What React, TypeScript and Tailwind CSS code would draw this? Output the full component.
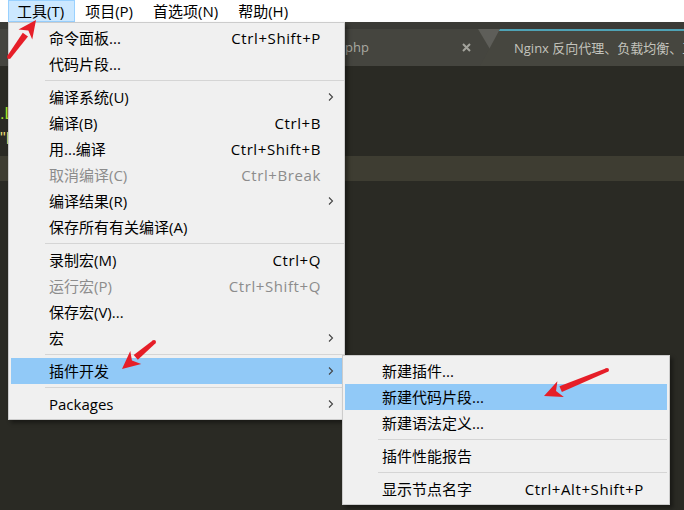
import React from "react";

type Entry =
	| "sep"
	| {
			label: string;
			shortcut?: string;
			sub?: boolean;
			disabled?: boolean;
			active?: boolean;
	  };

const mainItems: Entry[] = [
	{ label: "命令面板...", shortcut: "Ctrl+Shift+P" },
	{ label: "代码片段..." },
	"sep",
	{ label: "编译系统(U)", sub: true },
	{ label: "编译(B)", shortcut: "Ctrl+B" },
	{ label: "用...编译", shortcut: "Ctrl+Shift+B" },
	{ label: "取消编译(C)", shortcut: "Ctrl+Break", disabled: true },
	{ label: "编译结果(R)", sub: true },
	{ label: "保存所有有关编译(A)" },
	"sep",
	{ label: "录制宏(M)", shortcut: "Ctrl+Q" },
	{ label: "运行宏(P)", shortcut: "Ctrl+Shift+Q", disabled: true },
	{ label: "保存宏(V)..." },
	{ label: "宏", sub: true },
	"sep",
	{ label: "插件开发", sub: true, active: true },
	"sep",
	{ label: "Packages", sub: true },
];

const subItems: Entry[] = [
	{ label: "新建插件..." },
	{ label: "新建代码片段...", active: true },
	{ label: "新建语法定义..." },
	"sep",
	{ label: "插件性能报告" },
	"sep",
	{ label: "显示节点名字", shortcut: "Ctrl+Alt+Shift+P" },
];

const Chevron = () => (
	<svg width="6" height="10" viewBox="0 0 6 10">
		<polyline points="1,1.5 4.5,5 1,8.5" fill="none" stroke="#444" strokeWidth="1.1" />
	</svg>
);

const MenuList = ({ items, sub }: { items: Entry[]; sub?: boolean }) => (
	<div className="flex flex-col">
		{items.map((it, i) =>
			it === "sep" ? (
				<div key={i} className="flex h-[7px] items-center">
					<div className={sub ? "ml-[35px] mr-[2px] h-px flex-1 bg-[#d5d5d5]" : "ml-[36px] h-px flex-1 bg-[#d5d5d5]"} />
				</div>
			) : (
				<div
					key={i}
					className={`mx-[2px] flex h-[26px] items-center ${sub ? "pl-[37px]" : "pl-[38px]"} ${
						it.active ? "bg-[#91c9f7]" : ""
					} ${it.disabled ? "text-[#8c8c8c]" : "text-black"}`}
				>
					<span className="flex-1 whitespace-nowrap">{it.label}</span>
					{it.shortcut && <span className="whitespace-nowrap tracking-[0.6px]">{it.shortcut}</span>}
					<span className={`flex items-center ${sub ? "w-[23px]" : "w-[21px] pl-[7px]"}`}>
						{it.sub && <Chevron />}
					</span>
				</div>
			)
		)}
	</div>
);

// red callout arrow drawn from tail (x1,y1) to tip (x2,y2)
const Arrow = ({ x1, y1, x2, y2 }: { x1: number; y1: number; x2: number; y2: number }) => {
	const dx = x2 - x1;
	const dy = y2 - y1;
	const len = Math.sqrt(dx * dx + dy * dy);
	const ux = dx / len;
	const uy = dy / len;
	const nx = -uy;
	const ny = ux;
	const head = 18;
	const hw = 8.5;
	const bx = x2 - ux * head;
	const by = y2 - uy * head;
	const shaft = [
		[x1 + nx * 2, y1 + ny * 2],
		[bx + nx * 3.2, by + ny * 3.2],
		[bx - nx * 3.2, by - ny * 3.2],
		[x1 - nx * 2, y1 - ny * 2],
	];
	const tip = [
		[x2, y2],
		[bx + nx * hw, by + ny * hw],
		[x2 - ux * (head - 5), y2 - uy * (head - 5)],
		[bx - nx * hw, by - ny * hw],
	];
	const pts = (p: number[][]) => p.map((q) => q.join(",")).join(" ");
	return (
		<g fill="#e61e28">
			<polygon points={pts(shaft)} />
			<polygon points={pts(tip)} />
			<circle cx={x1} cy={y1} r="2" />
		</g>
	);
};

const App = () => {
	return (
		<div className="relative h-[510px] w-[684px] overflow-hidden bg-[#2a2a24] text-[15px] [font-family:'Open_Sans','Noto_Sans_CJK_SC',sans-serif]">
			{/* menu bar */}
			<div className="flex h-[22px] items-stretch bg-white pl-[8px] text-black">
				<div className="flex items-center border border-[#99d1ff] bg-[#cce8ff] pl-[8px] pr-[10px]">工具(T)</div>
				<div className="flex items-center px-[10px]">项目(P)</div>
				<div className="flex items-center px-[10px]">首选项(N)</div>
				<div className="flex items-center px-[10px]">帮助(H)</div>
			</div>

			{/* tabs */}
			<div className="h-[44px] bg-[#3b3b36] pt-[7px] text-[13px]">
				<div className="flex h-[37px] bg-[#5e5e59]">
					<div className="flex w-[500px] shrink-0 items-center justify-end bg-[#45453f] pr-[29px] [clip-path:polygon(0_0,478px_0,500px_100%,0_100%)]">
						<span className="mr-[93px] text-[#a9a9a2]">php</span>
						<svg width="9" height="9" viewBox="0 0 9 9">
							<path d="M1 1 L8 8 M8 1 L1 8" stroke="#a3a39c" strokeWidth="2" />
						</svg>
					</div>
					<div className="-ml-[20px] flex min-w-0 flex-1 items-center overflow-hidden border-t-2 border-[#4fa3b5] bg-[#46463f] pl-[34px] [clip-path:polygon(20px_0,100%_0,100%_100%,0_100%)]">
						<span className="whitespace-nowrap text-[#c3c3bc]">Nginx 反向代理、负载均衡、正</span>
					</div>
				</div>
			</div>

			{/* editor */}
			<div className="pt-[35px] text-[16px] [font-family:'Liberation_Sans',sans-serif]">
				<div className="flex h-[25px] items-center whitespace-nowrap text-[#a6e22e]">.L</div>
				<div className="flex h-[25px] items-center whitespace-nowrap text-[#e6db74]">"H</div>
				<div className="mt-[5px] h-[25px] bg-[#3e3d32]" />
			</div>

			{/* main dropdown */}
			<div className="absolute left-[8px] top-[22px] w-[337px] border border-[#cccccc] bg-[#f0f0f0] py-[2px] shadow-[3px_3px_4px_rgba(0,0,0,0.4)]">
				<MenuList items={mainItems} />
			</div>

			{/* submenu */}
			<div className="absolute left-[342px] top-[355px] w-[328px] border border-[#cccccc] bg-[#f0f0f0] py-[2px] shadow-[3px_3px_4px_rgba(0,0,0,0.4)]">
				<MenuList items={subItems} sub />
			</div>

			{/* annotations */}
			<svg className="pointer-events-none absolute inset-0" width="684" height="510">
				<Arrow x1={9} y1={57} x2={36} y2={20} />
				<Arrow x1={154} y1={342} x2={122} y2={369} />
				<Arrow x1={607} y1={370} x2={544} y2={396} />
			</svg>
		</div>
	);
};

export default App;
